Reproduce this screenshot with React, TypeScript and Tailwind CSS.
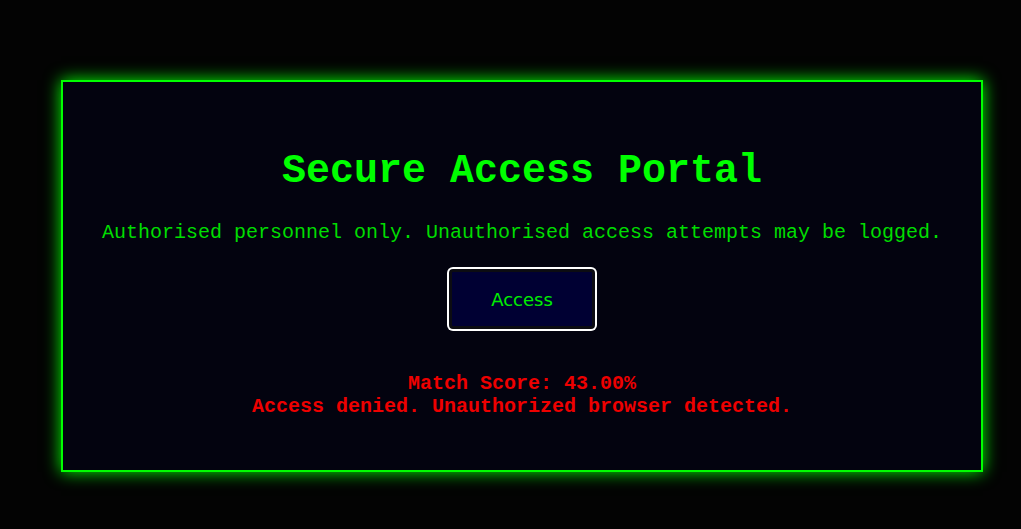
import React from "react";

export default function App() {
  return (
    <div className="w-[1021px] h-[529px] bg-[#030303] overflow-hidden pt-[80px] pl-[61px]">
      <div
        className="w-[922px] h-[392px] border-2 border-[#00ff00] bg-[#03030f] shadow-[0_0_16px_#00ff00] flex flex-col items-center"
        style={{ fontFamily: '"Liberation Mono", monospace' }}
      >
        <h1 className="mt-[66px] text-[40px] leading-[48px] font-bold text-[#00ff00]">
          Secure Access Portal
        </h1>
        <p className="mt-[25px] text-[20px] leading-[24px] text-[#00dd00]">
          Authorised personnel only. Unauthorised access attempts may be logged.
        </p>
        <button
          className="mt-[24px] w-[146px] h-[60px] rounded-[4px] ring-2 ring-white border-[3px] border-[#0c0c12] bg-[#000033] text-[18px] text-[#00ee00]"
          style={{ fontFamily: '"DejaVu Sans", sans-serif' }}
        >
          Access
        </button>
        <div className="mt-[43px] flex flex-col items-center text-[20px] leading-[23px] font-bold text-[#ee0000]">
          <span>Match Score: 43.00%</span>
          <span>Access denied. Unauthorized browser detected.</span>
        </div>
      </div>
    </div>
  );
}
